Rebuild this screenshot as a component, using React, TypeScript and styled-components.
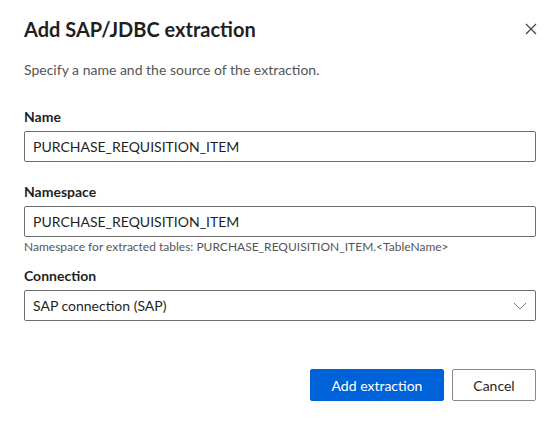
import React from "react";
import styled, { createGlobalStyle } from "styled-components";

const GlobalStyle = createGlobalStyle`
  html, body { margin: 0; padding: 0; background: #ffffff; }
  body { font-family: Lato, "Open Sans", Arial, sans-serif; color: #1f1f1f; }
  * { box-sizing: border-box; }
`;

const Dialog = styled.div`
  width: 560px;
  height: 425px;
  padding: 15px 24px 0 24px;
  display: flex;
  flex-direction: column;
`;

const Header = styled.div`
  display: flex;
  align-items: center;
  justify-content: space-between;
  height: 28px;
`;

const Title = styled.h1`
  margin: 0;
  font-size: 20px;
  font-weight: 700;
  line-height: 28px;
  color: #1f1f1f;
`;

const CloseButton = styled.button`
  border: none;
  background: transparent;
  padding: 0;
  width: 16px;
  height: 16px;
  display: flex;
  align-items: center;
  justify-content: center;
  margin-right: -3px;
  cursor: pointer;
`;

const Subtitle = styled.p`
  margin: 17px 0 0 0;
  font-size: 14px;
  line-height: 20px;
  color: #555555;
`;

const Form = styled.div`
  display: flex;
  flex-direction: column;
  margin-top: 27px;
`;

const Field = styled.div<{ $gap: number }>`
  display: flex;
  flex-direction: column;
  margin-top: ${(p) => p.$gap}px;
`;

const Label = styled.label`
  font-size: 14px;
  font-weight: 700;
  line-height: 20px;
  margin-bottom: 4px;
  color: #1f1f1f;
`;

const Input = styled.div`
  height: 31px;
  border: 1px solid #6e6e6e;
  border-radius: 2px;
  padding: 0 8px;
  display: flex;
  align-items: center;
  font-size: 14px;
  color: #1f1f1f;
`;

const Select = styled(Input)`
  justify-content: space-between;
`;

const Hint = styled.div`
  font-size: 12px;
  line-height: 16px;
  margin-top: 2px;
  color: #555555;
`;

const Footer = styled.div`
  display: flex;
  justify-content: flex-end;
  gap: 8px;
  margin-top: 48px;
`;

const Button = styled.button<{ $primary?: boolean }>`
  height: 32px;
  border-radius: 2px;
  font-family: Lato, "Open Sans", Arial, sans-serif;
  font-size: 14px;
  padding: 0;
  cursor: pointer;
  border: 1px solid ${(p) => (p.$primary ? "#0062d9" : "#8a8a8a")};
  background: ${(p) => (p.$primary ? "#0062d9" : "#ffffff")};
  color: ${(p) => (p.$primary ? "#ffffff" : "#1f1f1f")};
  width: ${(p) => (p.$primary ? 134 : 84)}px;
`;

export default function App() {
  return (
    <>
      <GlobalStyle />
      <Dialog>
        <Header>
          <Title>Add SAP/JDBC extraction</Title>
          <CloseButton aria-label="Close">
            <svg width="12" height="12" viewBox="0 0 12 12">
              <path d="M1 1 L11 11 M11 1 L1 11" stroke="#444" strokeWidth="1.2" fill="none" />
            </svg>
          </CloseButton>
        </Header>
        <Subtitle>Specify a name and the source of the extraction.</Subtitle>
        <Form>
          <Field $gap={0}>
            <Label>Name</Label>
            <Input>PURCHASE_REQUISITION_ITEM</Input>
          </Field>
          <Field $gap={20}>
            <Label>Namespace</Label>
            <Input>PURCHASE_REQUISITION_ITEM</Input>
            <Hint>Namespace for extracted tables: PURCHASE_REQUISITION_ITEM.&lt;TableName&gt;</Hint>
          </Field>
          <Field $gap={11}>
            <Label>Connection</Label>
            <Select>
              <span>SAP connection (SAP)</span>
              <svg width="14" height="8" viewBox="0 0 14 8">
                <path d="M1 1 L7 7 L13 1" stroke="#777" strokeWidth="1" fill="none" />
              </svg>
            </Select>
          </Field>
        </Form>
        <Footer>
          <Button $primary>Add extraction</Button>
          <Button>Cancel</Button>
        </Footer>
      </Dialog>
    </>
  );
}
